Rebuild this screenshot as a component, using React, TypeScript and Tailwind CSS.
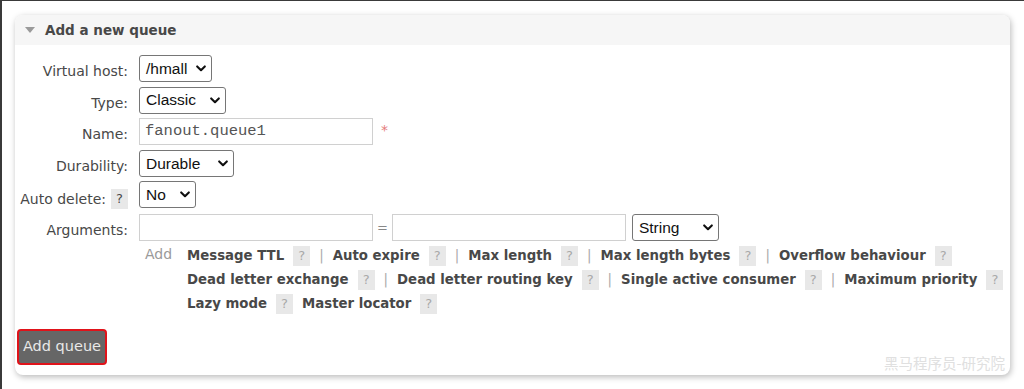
import React from 'react';

const labelCls = "w-[107px] shrink-0 text-right pt-[6px] leading-[20px] text-[14px] text-[#484848] whitespace-nowrap";

// Fake native select: fixed width, value on the left, chevron on the right
const Select: React.FC<{ value: string; width: string }> = ({ value, width }) => (
  <div className={`${width} h-[27px] flex items-center justify-between border border-[#767676] rounded-[3px] bg-white pl-[6px] pr-[4px] text-[15.5px] text-[#111] font-['Liberation_Sans',sans-serif]`}>
    <span>{value}</span>
    <svg width="10" height="7" viewBox="0 0 10 7" className="mr-[1px]">
      <path d="M1.2 1.4 L5 5.2 L8.8 1.4" fill="none" stroke="#111" strokeWidth="2.1" strokeLinecap="round" strokeLinejoin="round" />
    </svg>
  </div>
);

const Help: React.FC<{ dark?: boolean }> = ({ dark }) => (
  <span className={`inline-block shrink-0 w-[17px] h-[20px] leading-[20px] text-center bg-[#e8e8e8] font-normal text-[13px] ${dark ? "text-[#484848]" : "text-[#a8a8a8]"}`}>?</span>
);

const Sep: React.FC = () => <span className="mx-[9px] text-[#aaa] font-normal">|</span>;

const Arg: React.FC<{ name: string; last?: boolean }> = ({ name, last }) => (
  <span className="inline-flex items-center">
    <span className="mr-[9px]">{name}</span>
    <Help />
    {!last && <Sep />}
  </span>
);

const argLines: string[][] = [
  ["Message TTL", "Auto expire", "Max length", "Max length bytes", "Overflow behaviour"],
  ["Dead letter exchange", "Dead letter routing key", "Single active consumer", "Maximum priority"],
];

export default function App() {
  return (
    <div className="w-[1024px] h-[389px] bg-white border-t border-l-2 border-[#3a3a3a] pt-[14px] pl-[13px] font-['DejaVu_Sans',sans-serif] overflow-hidden">
      <div className="relative w-[995px] h-[360px] rounded-[8px] bg-white shadow-[1px_2px_6px_rgba(0,0,0,0.28)] overflow-hidden">
        {/* header */}
        <div className="h-[30px] bg-[#f6f6f6] flex items-center pl-[10px]">
          <svg width="10" height="6" viewBox="0 0 10 6" className="mr-[10px]">
            <path d="M0 0 H10 L5 6 Z" fill="#9a9a9a" />
          </svg>
          <span className="text-[13.5px] font-bold text-[#484848]">Add a new queue</span>
        </div>

        {/* form */}
        <div className="pt-[10px] pl-[6px] flex flex-col gap-[4.6px]">
          <div className="flex gap-[11px]">
            <div className={labelCls}>Virtual host:</div>
            <Select value="/hmall" width="w-[73px]" />
          </div>
          <div className="flex gap-[11px]">
            <div className={labelCls}>Type:</div>
            <Select value="Classic" width="w-[87px]" />
          </div>
          <div className="flex gap-[11px]">
            <div className={labelCls}>Name:</div>
            <div className="flex items-start">
              <div className="w-[234px] h-[27px] border border-[#d0d0d0] flex items-center pl-[5px] text-[15.5px] text-[#555] font-['Liberation_Mono',monospace]">
                fanout.queue1
              </div>
              <span className="ml-[8px] mt-[2px] text-[#e57b7b] text-[14px]">*</span>
            </div>
          </div>
          <div className="flex gap-[11px]">
            <div className={labelCls}>Durability:</div>
            <Select value="Durable" width="w-[95px]" />
          </div>
          <div className="flex gap-[11px]">
            <div className={`${labelCls} flex justify-end items-start gap-[5px] pt-[8px]`}>
              <span className="shrink-0">Auto delete:</span>
              <Help dark />
            </div>
            <Select value="No" width="w-[57px]" />
          </div>
          <div className="flex gap-[11px]">
            <div className={labelCls}>Arguments:</div>
            <div className="flex items-center">
              <div className="w-[234px] h-[27px] border border-[#d0d0d0]" />
              <span className="mx-[4px] text-[#888] text-[13px]">=</span>
              <div className="w-[234px] h-[27px] border border-[#d0d0d0]" />
              <div className="ml-[6px]">
                <Select value="String" width="w-[87px]" />
              </div>
            </div>
          </div>

          {/* add shortcuts */}
          <div className="flex pl-[124px] -mt-[2px]">
            <span className="w-[42px] text-[#9a9a9a] text-[14px] leading-[20px]">Add</span>
            <div className="flex flex-col text-[13.3px] font-bold text-[#484848] whitespace-nowrap">
              {argLines.map((line, i) => (
                <div key={i} className="h-[24px] flex items-center">
                  {line.map((n, j) => (
                    <Arg key={n} name={n} last={j === line.length - 1} />
                  ))}
                </div>
              ))}
              <div className="h-[24px] flex items-center">
                <span className="mr-[9px]">Lazy mode</span>
                <Help />
                <span className="ml-[9px] mr-[9px]">Master locator</span>
                <Help />
              </div>
            </div>
          </div>
        </div>

        <button className="ml-[2px] mt-[13px] w-[90px] h-[36px] bg-[#666] text-[#e8e8e8] text-[14.5px] border-2 border-[#e0131a] rounded-[4px]">
          Add queue
        </button>

        <div className="absolute right-[5px] bottom-[1px] text-[14.5px] text-[#e0e0e0] font-['Noto_Sans_CJK_SC',sans-serif]">
          黑马程序员-研究院
        </div>
      </div>
    </div>
  );
}
